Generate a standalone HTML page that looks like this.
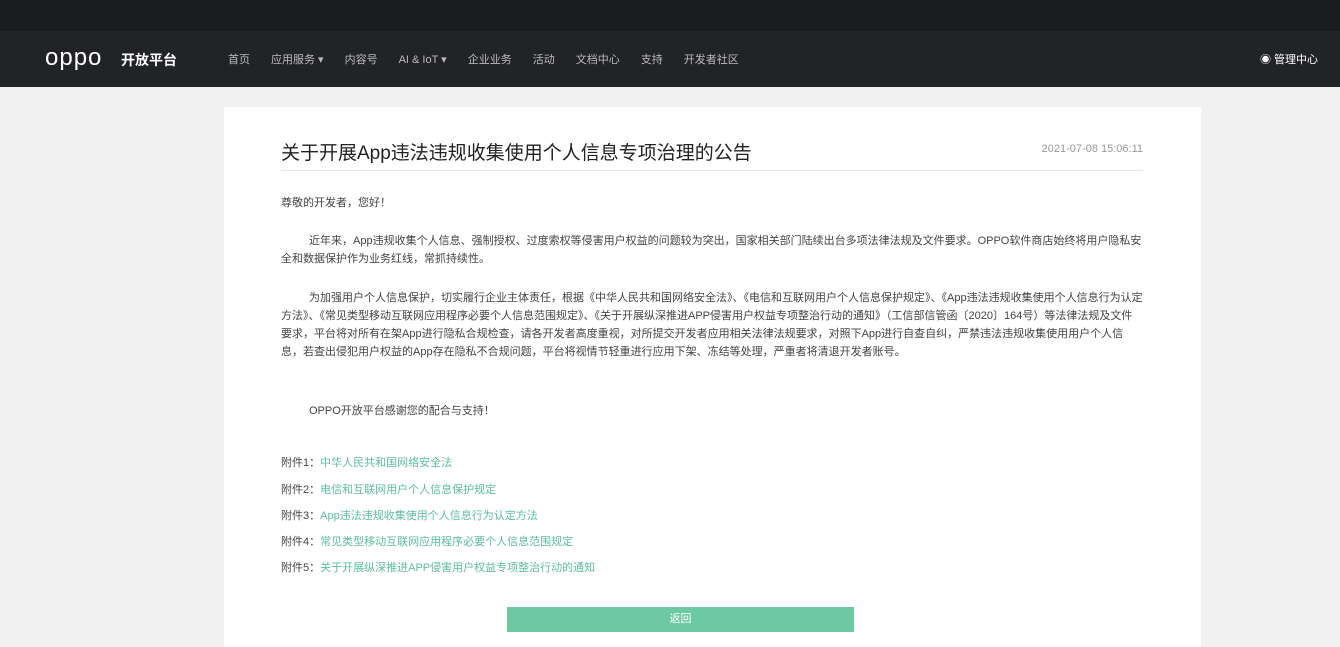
<!DOCTYPE html>
<html><head><meta charset="utf-8"><style>
*{margin:0;padding:0;box-sizing:border-box}
body{width:1340px;height:640px;overflow:hidden;background:#f1f1f1;font-family:"Liberation Sans","Noto Sans CJK SC",sans-serif;color:#333}
.top{height:31px;background:#1b1c1f}
.nav{height:56px;background:#222327;position:relative;color:#ddd}
.logo{position:absolute;left:45px;top:13px;font-size:24px;color:#fff;letter-spacing:1px}
.logo2{position:absolute;left:121px;top:19px;font-size:14px;font-weight:bold;color:#fff}
.menu{position:absolute;left:228px;top:20px;font-size:11px;color:#bbb}
.menu span{margin-right:21px}
.user{position:absolute;right:22px;top:20px;font-size:11px;color:#fff}
.card{position:absolute;left:224px;top:107px;width:977px;height:540px;background:#fff}
h1{position:absolute;left:57px;top:31px;font-size:19px;font-weight:normal;color:#222}
.date{position:absolute;right:58px;top:36px;font-size:11px;color:#999}
.hr{position:absolute;left:57px;right:58px;top:63px;border-top:1px solid #e6e6e6}
.t{position:absolute;left:57px;width:862px;font-size:11px;line-height:18px;color:#444}
.ind{text-indent:28px}
.a{position:absolute;left:57px;font-size:11px;color:#444}
.a b{font-weight:normal;color:#5cbf9b}
.btn{position:absolute;left:283px;top:500px;width:347px;height:25px;background:#6cc9a4;color:#fff;font-size:11px;text-align:center;line-height:25px}
</style></head><body>
<div class="top"></div>
<div class="nav">
<div class="logo">oppo</div><div class="logo2">开放平台</div>
<div class="menu"><span>首页</span><span>应用服务 ▾</span><span>内容号</span><span>AI &amp; IoT ▾</span><span>企业业务</span><span>活动</span><span>文档中心</span><span>支持</span><span>开发者社区</span></div>
<div class="user">◉ 管理中心</div>
</div>
<div class="card">
<h1>关于开展App违法违规收集使用个人信息专项治理的公告</h1>
<div class="date">2021-07-08 15:06:11</div>
<div class="hr"></div>
<div class="t" style="top:87px">尊敬的开发者，您好！</div>
<div class="t ind" style="top:125px">近年来，App违规收集个人信息、强制授权、过度索权等侵害用户权益的问题较为突出，国家相关部门陆续出台多项法律法规及文件要求。OPPO软件商店始终将用户隐私安全和数据保护作为业务红线，常抓持续性。</div>
<div class="t ind" style="top:182px">为加强用户个人信息保护，切实履行企业主体责任，根据《中华人民共和国网络安全法》、《电信和互联网用户个人信息保护规定》、《App违法违规收集使用个人信息行为认定方法》、《常见类型移动互联网应用程序必要个人信息范围规定》、《关于开展纵深推进APP侵害用户权益专项整治行动的通知》（工信部信管函〔2020〕164号）等法律法规及文件要求，平台将对所有在架App进行隐私合规检查，请各开发者高度重视，对所提交开发者应用相关法律法规要求，对照下App进行自查自纠，严禁违法违规收集使用用户个人信息，若查出侵犯用户权益的App存在隐私不合规问题，平台将视情节轻重进行应用下架、冻结等处理，严重者将清退开发者账号。</div>
<div class="t ind" style="top:295px">OPPO开放平台感谢您的配合与支持！</div>
<div class="a" style="top:347px">附件1：<b>中华人民共和国网络安全法</b></div>
<div class="a" style="top:374px">附件2：<b>电信和互联网用户个人信息保护规定</b></div>
<div class="a" style="top:400px">附件3：<b>App违法违规收集使用个人信息行为认定方法</b></div>
<div class="a" style="top:426px">附件4：<b>常见类型移动互联网应用程序必要个人信息范围规定</b></div>
<div class="a" style="top:452px">附件5：<b>关于开展纵深推进APP侵害用户权益专项整治行动的通知</b></div>
<div class="btn">返回</div>
</div>
</body></html>
